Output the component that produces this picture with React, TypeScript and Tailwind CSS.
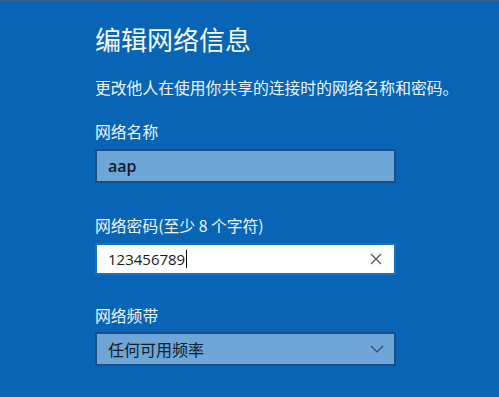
export default function App() {
  const font = { fontFamily: '"Noto Sans CJK SC", "Noto Sans", sans-serif' };
  return (
    <div
      className="w-[499px] h-[397px] bg-[#0865b5] text-white overflow-hidden border-t border-[#3d5f84]"
      style={font}
    >
      <div className="pl-[95px] pt-[20px] w-[396px] box-content">
        <h1 className="text-[26px] leading-[36px] font-normal text-[#f4f8fc]">编辑网络信息</h1>
        <p className="mt-[20px] text-[15.8px] leading-[22px] whitespace-nowrap text-[#eef4fa]">
          更改他人在使用你共享的连接时的网络名称和密码。
        </p>

        <div className="mt-[22px] text-[15.8px] leading-[22px] text-[#eef4fa]">网络名称</div>
        <div className="mt-[6px] h-[34px] w-[301px] border-2 border-[#174f86] bg-[#6ea6d8] flex items-center pl-[11px]">
          <span className="text-[16px] text-[#0f1d2c]" style={{ fontFamily: '"Open Sans", "Noto Sans", sans-serif', fontWeight: 600 }}>aap</span>
        </div>

        <div className="mt-[32px] text-[15.8px] leading-[22px] text-[#eef4fa]">网络密码(至少 8 个字符)</div>
        <div className="mt-[6px] h-[32px] w-[301px] border-2 border-[#1670c6] bg-white flex items-center pl-[11px] pr-[10px]">
          <span className="text-[15px] text-[#1a1a1a]" style={{ fontFamily: '"Open Sans", "Noto Sans", sans-serif' }}>123456789</span>
          <span className="w-px h-[18px] bg-black ml-[1px]" />
          <span className="flex-1" />
          <svg width="12" height="12" viewBox="0 0 12 12" className="mr-[2px]">
            <path d="M1 1 L11 11 M11 1 L1 11" stroke="#555" strokeWidth="1.2" />
          </svg>
        </div>

        <div className="mt-[30px] text-[15.8px] leading-[22px] text-[#eef4fa]">网络频带</div>
        <div className="mt-[5px] h-[34px] w-[301px] border-2 border-[#174f86] bg-[#6ea6d8] flex items-center pl-[11px] pr-[10px]">
          <span className="text-[16px] text-[#0f1d2c] flex-1">任何可用频率</span>
          <svg width="14" height="8" viewBox="0 0 14 8">
            <path d="M1 1 L7 7 L13 1" stroke="#2b4a6a" strokeWidth="1.2" fill="none" />
          </svg>
        </div>
      </div>
    </div>
  );
}
